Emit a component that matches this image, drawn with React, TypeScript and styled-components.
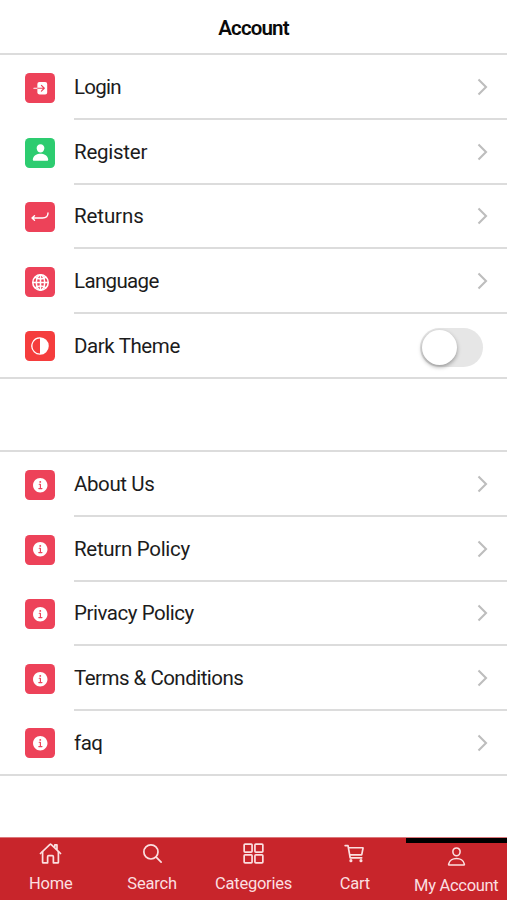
import React from 'react';
import styled, { createGlobalStyle } from 'styled-components';
import {
  IoLogIn, IoPerson, IoGlobeOutline, IoContrast, IoInformationCircle,
  IoHomeOutline, IoSearchOutline, IoGridOutline, IoCartOutline, IoPersonOutline,
} from 'react-icons/io5';

const GlobalStyle = createGlobalStyle`
  * { box-sizing: border-box; }
  body { margin: 0; background: #fff; font-family: Roboto, "Open Sans", sans-serif; }
`;

const Screen = styled.div`
  display: flex;
  flex-direction: column;
  height: 900px;
  width: 100%;
  background: #fff;
  overflow: hidden;
`;

const Header = styled.header`
  height: 55px;
  flex: none;
  display: flex;
  align-items: center;
  justify-content: center;
  border-bottom: 2px solid #dcdcdc;
  padding-top: 2px;
`;

const Title = styled.h1`
  margin: 0;
  font-size: 20.5px;
  font-weight: 600;
  letter-spacing: -0.85px;
  color: #0a0a0a;
`;

const List = styled.ul<{ $ruled?: boolean }>`
  list-style: none;
  margin: 0;
  padding: 0 0 0 25px;
  flex: none;
  border-bottom: 2px solid #dcdcdc;
  ${p => p.$ruled && 'border-top: 2px solid #dcdcdc; margin-top: 71px;'}
`;

const Row = styled.li`
  display: flex;
  align-items: center;
  height: 64.75px;
  &:last-child { height: 63px; }
`;

const Tile = styled.span<{ $color: string }>`
  width: 30px;
  height: 30px;
  margin: 1px 19px 0 0;
  flex: none;
  border-radius: 4.5px;
  background: ${p => p.$color};
  color: #fff;
  display: flex;
  align-items: center;
  justify-content: center;
  font-size: 18.5px;
`;

const Content = styled.div`
  flex: 1;
  height: 100%;
  display: flex;
  align-items: center;
  justify-content: space-between;
  padding: 1px 17px 0 0;
  border-bottom: 2px solid #dcdcdc;
  ${Row}:last-child & { border-bottom: 0; }
`;

const Label = styled.span<{ $spacing: number }>`
  font-size: 20.5px;
  line-height: 28px;
  letter-spacing: ${p => p.$spacing}px;
  color: #1c1c1c;
`;

const Switch = styled.span`
  width: 63px;
  height: 39px;
  margin: 2px 7px 0 0;
  border-radius: 20px;
  background: #e6e6e6;
  padding: 2px;
`;

const Knob = styled.span`
  display: block;
  width: 35px;
  height: 35px;
  border-radius: 50%;
  background: #fff;
  box-shadow: 0 2px 4px rgba(0, 0, 0, 0.35);
`;

const TabBar = styled.nav`
  display: grid;
  grid-template-columns: repeat(5, 1fr);
  height: 63px;
  margin-top: auto;
  background: #c8252b;
  border-top: 1px solid #dc777b;
  color: #fbdfe0;
`;

const Tab = styled.a<{ $active?: boolean }>`
  display: flex;
  flex-direction: column;
  align-items: center;
  padding-top: 3px;
  border-top: ${p => (p.$active ? '5px solid #000' : '1px solid transparent')};
  svg {
    font-size: ${p => (p.$active ? 21 : 23)}px;
    flex: none;
  }
  svg * { stroke-width: 38px; }
`;

const TabLabel = styled.span<{ $spacing: number }>`
  font-size: 16.5px;
  line-height: 20px;
  margin-top: 9px;
  white-space: nowrap;
  letter-spacing: ${p => p.$spacing}px;
`;

const Chevron = () => (
  <svg width="14" height="20" viewBox="0 0 14 20" fill="none" stroke="#bdbdbd" strokeWidth="2.1">
    <path d="M2.5 2.5 L10 10 L2.5 17.5" />
  </svg>
);

const ReturnArrow = () => (
  <svg width="20" height="20" viewBox="0 0 20 20" fill="none" stroke="#fff" strokeWidth="1.4" strokeLinecap="round" strokeLinejoin="round">
    <path d="M18 6 C18 9.5 16 11 12.5 11 H2 M4.5 8.7 L2 11 L4.5 13.3" />
  </svg>
);

const Globe = styled(IoGlobeOutline)`
  * { stroke-width: 42px; }
`;

const PINK = '#ed4259';

const accountRows = [
  { label: 'Login', spacing: -0.75, color: PINK, icon: <IoLogIn /> },
  { label: 'Register', spacing: -0.25, color: '#2dcc70', icon: <IoPerson size={19} /> },
  { label: 'Returns', spacing: -0.1, color: PINK, icon: <ReturnArrow /> },
  { label: 'Language', spacing: -0.65, color: PINK, icon: <Globe size={19} /> },
  { label: 'Dark Theme', spacing: -0.4, color: '#f53d3d', icon: <IoContrast size={20} />, toggle: true },
];

const infoRows = [
  { label: 'About Us', spacing: -0.4 },
  { label: 'Return Policy', spacing: -0.3 },
  { label: 'Privacy Policy', spacing: -0.46 },
  { label: 'Terms & Conditions', spacing: -0.52 },
  { label: 'faq', spacing: -0.5 },
];

const tabs = [
  { label: 'Home', spacing: -0.2, icon: <IoHomeOutline /> },
  { label: 'Search', spacing: -0.2, icon: <IoSearchOutline /> },
  { label: 'Categories', spacing: -0.25, icon: <IoGridOutline /> },
  { label: 'Cart', spacing: -0.2, icon: <IoCartOutline /> },
  { label: 'My Account', spacing: -0.3, icon: <IoPersonOutline />, active: true },
];

export default function App() {
  return (
    <Screen>
      <GlobalStyle />
      <Header><Title>Account</Title></Header>
      <List>
        {accountRows.map(row => (
          <Row key={row.label}>
            <Tile $color={row.color}>{row.icon}</Tile>
            <Content>
              <Label $spacing={row.spacing}>{row.label}</Label>
              {row.toggle ? <Switch role="switch" aria-checked={false}><Knob /></Switch> : <Chevron />}
            </Content>
          </Row>
        ))}
      </List>
      <List $ruled>
        {infoRows.map(row => (
          <Row key={row.label}>
            <Tile $color={PINK}><IoInformationCircle /></Tile>
            <Content>
              <Label $spacing={row.spacing}>{row.label}</Label>
              <Chevron />
            </Content>
          </Row>
        ))}
      </List>
      <TabBar>
        {tabs.map(tab => (
          <Tab key={tab.label} $active={tab.active}>
            {tab.icon}
            <TabLabel $spacing={tab.spacing}>{tab.label}</TabLabel>
          </Tab>
        ))}
      </TabBar>
    </Screen>
  );
}
